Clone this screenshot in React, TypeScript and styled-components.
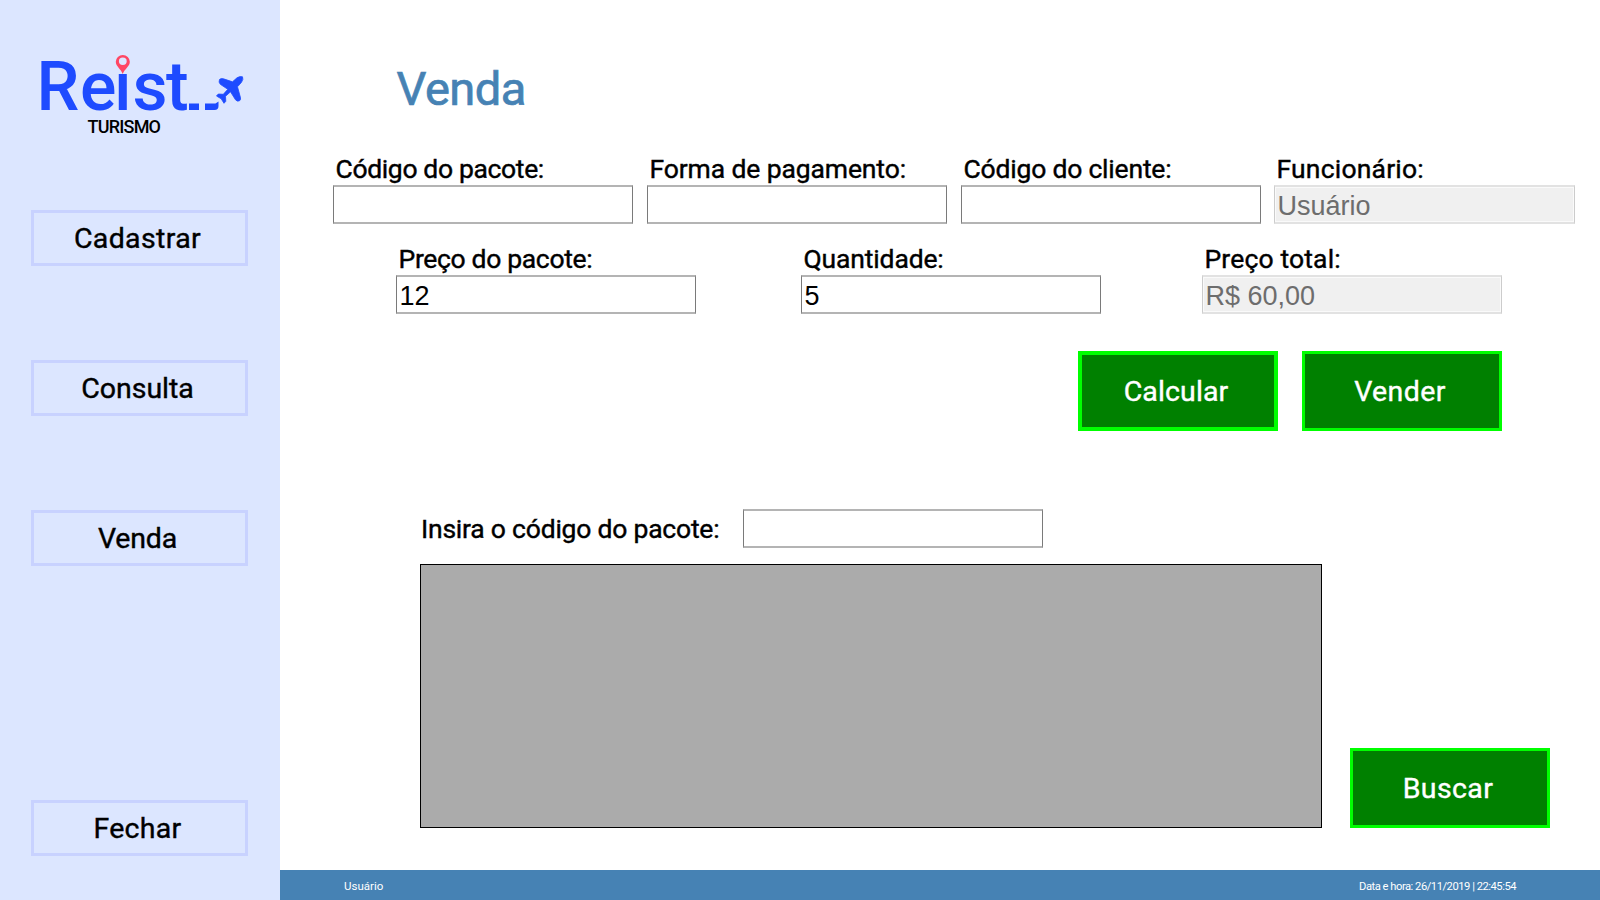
import React from 'react';
import styled, { createGlobalStyle } from 'styled-components';

const GlobalStyle = createGlobalStyle`
  * { box-sizing: border-box; }
  body { margin: 0; background: #fff; overflow: hidden; }
`;

const ui = `Roboto, "Liberation Sans", sans-serif`;

const Page = styled.div`
  display: flex;
  width: 1600px;
  height: 900px;
  font-family: ${ui};
  color: #000;
`;

const Sidebar = styled.nav`
  display: flex;
  flex-direction: column;
  width: 280px;
  height: 900px;
  padding: 50px 31px 44px;
  background: #dce6ff;
`;

const Logo = styled.svg`
  display: block;
  width: 217px;
  height: 90px;
  margin-bottom: 70px;
  overflow: visible;
`;

const NavButton = styled.button<{ $spacing: number; $gap?: number }>`
  width: 217px;
  height: 56px;
  flex: none;
  margin: 0 0 ${(p) => p.$gap ?? 94}px;
  padding: 2px 4px 0 0;
  border: 3px solid #c8d2ff;
  background: transparent;
  color: #000;
  font: 400 28.5px/48px ${ui};
  -webkit-text-stroke: 0.4px currentColor;
  letter-spacing: ${(p) => p.$spacing}px;
`;

const Main = styled.main`
  display: flex;
  flex-direction: column;
  width: 1320px;
  height: 900px;
`;

const Content = styled.section`
  height: 870px;
  padding-top: 60px;
`;

const Title = styled.h1`
  margin: 0 0 0 116.5px;
  height: 92px;
  color: #4682b4;
  font: 400 47px/57px ${ui};
  -webkit-text-stroke: 0.7px currentColor;
  letter-spacing: -0.5px;
`;

const FieldRow = styled.div<{ $left: number; $columns: string }>`
  display: grid;
  grid-template-columns: ${(p) => p.$columns};
  height: 90px;
  padding-left: ${(p) => p.$left}px;
`;

const Field = styled.label`
  display: block;
`;

const Caption = styled.span<{ $spacing: number }>`
  display: block;
  height: 33px;
  padding-left: 2.5px;
  font-size: 26.5px;
  -webkit-text-stroke: 0.4px currentColor;
  line-height: 34px;
  white-space: nowrap;
  letter-spacing: ${(p) => p.$spacing}px;
`;

const Input = styled.input<{ $wide?: boolean }>`
  display: block;
  width: ${(p) => (p.$wide ? 301 : 300)}px;
  height: 39px;
  margin: 0;
  padding: 3px 2px 0 2.5px;
  border: solid #7a7a7a;
  border-width: 2px 1px;
  border-top-color: #b4b4b4;
  border-bottom-color: #b4b4b4;
  border-radius: 0;
  background: #fff;
  color: #000;
  font: 27px "Liberation Sans", Arial, sans-serif;
  &:disabled {
    border-color: #e2e2e2 #ccc;
    background: #f0f0f0;
    box-shadow: inset 0 0 0 1px #fafafa;
    color: #6d6d6d;
  }
`;

const Actions = styled.div`
  display: flex;
  gap: 24px;
  padding: 19px 0 0 798px;
  height: 177px;
`;

const ActionButton = styled.button<{ $spacing: number; $focused?: boolean }>`
  width: 200px;
  height: 80px;
  flex: none;
  padding: 2px 4px 0 0;
  border: ${(p) => (p.$focused ? 4 : 3)}px solid #00ff00;
  background: #008000;
  color: #fff;
  font: 400 28.5px/1 ${ui};
  -webkit-text-stroke: 0.4px currentColor;
  letter-spacing: ${(p) => p.$spacing}px;
`;

const Search = styled.div`
  display: flex;
  align-items: center;
  height: 39px;
  padding-left: 141px;
`;

const SearchLabel = styled.label`
  width: 322px;
  font-size: 26.5px;
  -webkit-text-stroke: 0.4px currentColor;
  line-height: 39px;
  white-space: nowrap;
  letter-spacing: -0.22px;
`;

const Results = styled.div`
  display: flex;
  align-items: flex-end;
  gap: 28px;
  padding: 16px 0 0 140px;
`;

const Grid = styled.div`
  width: 902px;
  height: 264px;
  border: 1px solid #000;
  background: #ababab;
`;

const StatusBar = styled.footer`
  display: flex;
  justify-content: space-between;
  height: 30px;
  padding: 1px 84px 0 64px;
  background: #4682b4;
  color: #fff;
  font-size: 11.5px;
  line-height: 31px;
`;

const Clock = styled.span`
  font-size: 11.2px;
  letter-spacing: -0.48px;
`;

const brand = '#1e4bff';

function ReistLogo() {
  return (
    <Logo viewBox="31 50 217 90">
      <text x="36.500 80 114 132.500 166" y="110" fill={brand} fontFamily={ui} fontWeight="500" fontSize="68">Reıst</text>
      <path d="M189 103.500h10v6.500h-10zM205 103.500h10.500l3-2v4.500q0 4-4 4h-9.500z" fill={brand} />
      <path fillRule="evenodd" fill="#ff4664" d="M122.700 74C121 69 115.800 66.500 115.800 61.800a7 6.900 0 0 1 14 0C129.800 66.500 124.500 69 122.700 74zM118.900 61.200a3.900 3.700 0 1 0 7.800 0a3.900 3.700 0 1 0 -7.800 0z" />
      <path fill={brand} stroke={brand} strokeWidth="0.8" strokeLinejoin="round" d="M219.500 79.500q1.500-1.500 4-.7l9 3 4.500-4q3-1.800 5.500-1q1.200 2.500-1 5.500l-4 4.500 3 11q.5 2-1 3-2.500 1-4-1l-5-8-5 4.500.3 5-1.800 2-2.800-4.500-4.700-2.800 1.800-2 5 .3 4.500-5-7.500-5q-2-2-.8-4.800z" />
      <text x="87.500" y="133" fontFamily={ui} fontWeight="500" fontSize="18" textLength="73.5">TURISMO</text>
    </Logo>
  );
}

type FieldProps = { label: string; spacing: number; value?: string; disabled?: boolean; wide?: boolean };

function LabeledField({ label, spacing, value, disabled, wide }: FieldProps) {
  return (
    <Field>
      <Caption $spacing={spacing}>{label}</Caption>
      <Input defaultValue={value} disabled={disabled} $wide={wide} />
    </Field>
  );
}

export default function App() {
  return (
    <Page>
      <GlobalStyle />
      <Sidebar>
        <ReistLogo />
        <NavButton $spacing={0.36}>Cadastrar</NavButton>
        <NavButton $spacing={0}>Consulta</NavButton>
        <NavButton $spacing={-0.2} $gap={234}>Venda</NavButton>
        <NavButton $spacing={0.3} $gap={0}>Fechar</NavButton>
      </Sidebar>
      <Main>
        <Content>
          <Title>Venda</Title>
          <FieldRow $left={53} $columns="314px 314px 313px 301px">
            <LabeledField label="Código do pacote:" spacing={-0.35} />
            <LabeledField label="Forma de pagamento:" spacing={-0.12} />
            <LabeledField label="Código do cliente:" spacing={-0.2} />
            <LabeledField label="Funcionário:" spacing={0.2} value="Usuário" disabled wide />
          </FieldRow>
          <FieldRow $left={116} $columns="405px 401px 300px">
            <LabeledField label="Preço do pacote:" spacing={-0.33} value="12" />
            <LabeledField label="Quantidade:" spacing={-0.15} value="5" />
            <LabeledField label="Preço total:" spacing={0.15} value="R$ 60,00" disabled />
          </FieldRow>
          <Actions>
            <ActionButton $spacing={0.13} $focused>Calcular</ActionButton>
            <ActionButton $spacing={0.4}>Vender</ActionButton>
          </Actions>
          <Search>
            <SearchLabel htmlFor="package">Insira o código do pacote:</SearchLabel>
            <Input id="package" />
          </Search>
          <Results>
            <Grid />
            <ActionButton $spacing={0.4}>Buscar</ActionButton>
          </Results>
        </Content>
        <StatusBar>
          <span>Usuário</span>
          <Clock>Data e hora: 26/11/2019 | 22:45:54</Clock>
        </StatusBar>
      </Main>
    </Page>
  );
}
